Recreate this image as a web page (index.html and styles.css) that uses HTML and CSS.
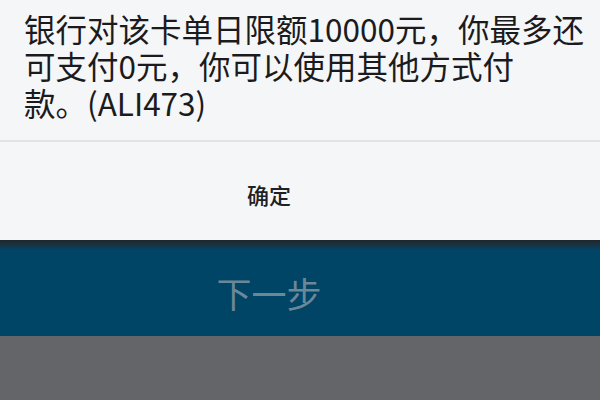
FILE: index.html
```html
<!DOCTYPE html>
<html lang="zh-CN">
<head>
<meta charset="utf-8">
<link rel="stylesheet" href="styles.css">
</head>
<body>
<div class="page">
  <div class="dialog">
    <p class="msg">银行对该卡单日限额10000元，你最多还可支付0元，你可以使用其他方式付<br>款。(ALI473)</p>
    <div class="ok">确定</div>
  </div>
  <div class="next">
    <div class="edge"></div>
    <div class="next-label">下一步</div>
  </div>
  <div class="rest"></div>
</div>
</body>
</html>
```
FILE: styles.css
```css
html, body {
  margin: 0;
  padding: 0;
}
body {
  width: 600px;
  height: 400px;
  overflow: hidden;
  font-family: "Noto Sans CJK SC", "Noto Sans", sans-serif;
}
.page {
  display: flex;
  flex-direction: column;
  height: 400px;
}
.dialog {
  background: #f5f6f8;
  height: 240px;
  display: flex;
  flex-direction: column;
}
.msg {
  margin: 0;
  padding: 10px 0 0 24px;
  height: 142px;
  box-sizing: border-box;
  font-size: 31.5px;
  line-height: 37px;
  color: #1b1b1d;
  border-bottom: 2px solid #e1e3e6;
}
.ok {
  flex: 1;
  display: flex;
  align-items: center;
  justify-content: center;
  padding: 6px 62px 0 0;
  font-size: 22px;
  font-weight: 500;
  color: #202124;
}
.next {
  height: 96px;
  background: #004466;
  display: flex;
  flex-direction: column;
}
.edge {
  height: 10px;
  background: linear-gradient(#1a2630 0, #1f2d36 30%, #0d3a52 70%, #004466 100%);
}
.next-label {
  flex: 1;
  display: flex;
  align-items: center;
  justify-content: center;
  font-size: 35px;
  color: #6b8899;
  padding: 0 62px 2px 0;
}
.rest {
  flex: 1;
  background: #646569;
}
```
